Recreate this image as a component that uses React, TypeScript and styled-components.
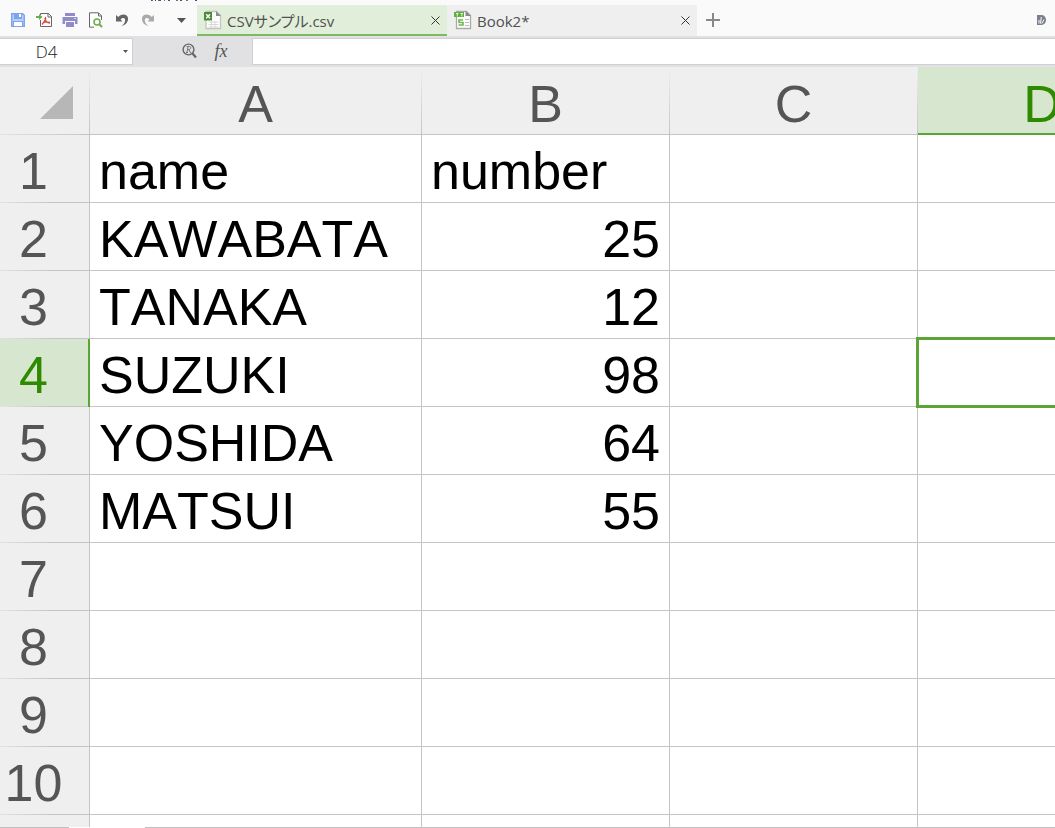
import React from "react";
import styled, { createGlobalStyle } from "styled-components";

const GlobalStyle = createGlobalStyle`
  * { box-sizing: border-box; }
  body { margin: 0; background: #fff; }
  button, input { font: inherit; color: inherit; }
`;

const UI_FONT = '"Open Sans", "Noto Sans", "Noto Sans CJK JP", sans-serif';
const SHEET_FONT = '"Liberation Sans", Arial, sans-serif';

const Window = styled.div`
  height: 100vh;
  display: flex;
  flex-direction: column;
  overflow: hidden;
  font-family: ${UI_FONT};
`;

const TopBar = styled.header`
  position: relative;
  flex: none;
  display: flex;
  align-items: flex-end;
  height: 36px;
  background: #fafafa;
`;

const MenuRemnant = styled.svg`
  position: absolute;
  left: 150px;
  top: 0;
`;

const QuickTools = styled.div`
  flex: none;
  display: flex;
  align-items: center;
  gap: 6px;
  width: 197px;
  height: 32px;
  padding: 0 0 0 8px;
`;

const ToolButton = styled.button<{ $push?: boolean }>`
  display: grid;
  place-items: center;
  width: 20px;
  height: 20px;
  margin: 0 0 0 ${(p) => (p.$push ? "7px" : "0")};
  padding: 0;
  border: 0;
  background: none;
`;

const TabItem = styled.div<{ $active?: boolean }>`
  flex: none;
  display: flex;
  align-items: center;
  width: 250px;
  height: 31px;
  padding: 1px 4px 0 7px;
  background: ${(p) => (p.$active ? "#e1eed9" : "#efefef")};
  border-bottom: 2px solid ${(p) => (p.$active ? "#7fb966" : "#efefef")};
`;

const TabLabel = styled.button`
  flex: 1;
  display: flex;
  align-items: center;
  gap: 5px;
  padding: 0;
  border: 0;
  background: none;
  font-size: 15px;
  line-height: 24px;
  font-feature-settings: "palt";
  white-space: nowrap;
  text-align: left;
  color: #505050;
`;

const TabText = styled.span`
  padding-top: 1px;
`;

const IconButton = styled.button`
  display: grid;
  place-items: center;
  width: 16px;
  height: 16px;
  padding: 0;
  border: 0;
  background: none;
`;

const NewTab = styled(IconButton)`
  width: 32px;
  height: 32px;
`;

const Badge = styled.div`
  display: grid;
  place-items: center;
  height: 32px;
  margin-left: auto;
  padding-right: 9px;
`;

const FormulaBar = styled.div`
  flex: none;
  display: flex;
  height: 31px;
  padding: 2px 0;
  background: #e1e1e4;
`;

const NameBox = styled.div`
  flex: none;
  display: flex;
  align-items: center;
  width: 133px;
  background: #fff;
  border: 1px solid #cfcfd6;
  border-left: 0;
`;

const NameInput = styled.input`
  width: 118px;
  height: 24px;
  padding: 0 25px 0 0;
  border: 0;
  outline: 0;
  background: none;
  text-align: center;
  font-size: 17px;
  font-weight: 300;
  color: #222;
`;

const FormulaTools = styled.div`
  flex: none;
  display: flex;
  align-items: center;
  justify-content: flex-end;
  gap: 13px;
  width: 119px;
  padding: 0 21px 2px 0;
`;

const FxButton = styled.button`
  width: 20px;
  padding: 0;
  border: 0;
  background: none;
  font: italic 18px/20px "Liberation Serif", serif;
  color: #555;
`;

const FormulaInput = styled.input`
  flex: 1;
  min-width: 0;
  padding: 0 6px;
  border: 1px solid #cfcfd6;
  border-right: 0;
  outline: 0;
  background: #fff;
  font-size: 17px;
`;

const SheetArea = styled.main`
  flex: 1;
  min-height: 0;
  overflow: hidden;
`;

const Sheet = styled.table`
  table-layout: fixed;
  width: 1166px;
  border-collapse: separate;
  border-spacing: 0;
  font-family: ${SHEET_FONT};
  font-size: 52px;
  line-height: 60px;
  font-kerning: none;
`;

const Col = styled.col<{ $w: number }>`
  width: ${(p) => p.$w}px;
`;

const Corner = styled.td`
  height: 68px;
  padding: 0 17px 16px 0;
  vertical-align: bottom;
  background:
    linear-gradient(#efefef, #c4c4c4) right / 1px 100% no-repeat,
    linear-gradient(90deg, #e2e2e2, #c4c4c4) bottom / 100% 1px no-repeat,
    #efefef;
`;

const CornerMark = styled.svg`
  display: block;
  margin-left: auto;
`;

const ColumnHead = styled.th<{ $active?: boolean }>`
  height: 68px;
  padding: ${(p) => (p.$active ? "6px 0 0" : "6px 1px 1px 0")};
  font-weight: 400;
  color: ${(p) => (p.$active ? "#308a00" : "#555")};
  background: ${(p) =>
    p.$active
      ? "linear-gradient(#5aa535, #5aa535) bottom / 100% 2px no-repeat, #d7e6cf"
      : "linear-gradient(#c4c4c4, #c4c4c4) bottom / 100% 1px no-repeat, linear-gradient(#efefef, #c4c4c4) right / 1px 100% no-repeat, #efefef"};
`;

const RowHead = styled.th<{ $active?: boolean }>`
  height: 68px;
  padding: 5px 23px 1px 0;
  font-weight: 400;
  color: ${(p) => (p.$active ? "#308a00" : "#555")};
  background:
    linear-gradient(${(p) => (p.$active ? "#5aa535, #5aa535" : "#c4c4c4, #c4c4c4")}) right /
      ${(p) => (p.$active ? "2px" : "1px")} 100% no-repeat,
    linear-gradient(90deg, #e2e2e2, #c4c4c4 60%) bottom / 100% 1px no-repeat,
    ${(p) => (p.$active ? "#d7e6cf" : "#efefef")};
`;

const Cell = styled.td<{ $align?: "right"; $selected?: boolean }>`
  position: relative;
  z-index: ${(p) => (p.$selected ? 1 : 0)};
  height: 68px;
  padding: 5px 9px 0;
  text-align: ${(p) => p.$align ?? "left"};
  white-space: nowrap;
  color: #000;
  background: #fff;
  border-right: 1px solid #c4c4c4;
  border-bottom: 1px solid #c4c4c4;
`;

const Selection = styled.div`
  position: absolute;
  inset: -2px;
  border: 3px solid #5aa535;
`;

const SheetTabsEdge = styled.footer`
  flex: none;
  height: 1px;
  padding-left: 69px;
  background: #c0c0c0;
`;

const SheetTab = styled.div`
  width: 76px;
  height: 1px;
  background: #fff;
`;

const SaveIcon = () => (
  <svg width="16" height="16" viewBox="0 0 16 16">
    <path d="M1 1h12l2 2v12H1z" fill="#7da4ec" />
    <path d="M2.500 2.500H4V7h8V2.500l1.500 1v10H13V9H3v4.500h-.5z" fill="#b9cff6" />
    <path d="M9 2h2v3H9zM4 10h8v4H4z" fill="#fff" />
  </svg>
);

const PdfIcon = () => (
  <svg width="17" height="16" viewBox="0 0 17 16">
    <path d="M4.500 3V1.500h8l3 3v10h-11V8" fill="#fff" stroke="#666" />
    <path d="M12 1v4h4" fill="none" stroke="#666" />
    <path d="M0 4h3V2l3.500 3L3 8V6H0z" fill="#6aae4c" />
    <path d="M9 5.500c1.500 0 .5 3-3 7M9 6c.3 3 2 5 5 5M7 11c2-1.500 4-1.500 7-.5" fill="none" stroke="#e04848" strokeWidth="1.400" />
  </svg>
);

const PrintIcon = () => (
  <svg width="16" height="16" viewBox="0 0 16 16">
    <path d="M3 1h10v3H3zM.5 5h15v7H13V9H3v3H.5zM4 10h8v5H4z" fill="#918bcb" />
    <path d="M12 6.500h2" stroke="#d9d7f0" />
  </svg>
);

const PreviewIcon = () => (
  <svg width="16" height="16" viewBox="0 0 16 16">
    <path d="M6 15.200H1.500V.800h9l3 3V8" fill="#fff" stroke="#666" />
    <path d="M10.500 1v3h3" fill="none" stroke="#666" />
    <circle cx="9" cy="10" r="3" fill="#fff" stroke="#6aae4c" strokeWidth="1.500" />
    <path d="M11 12l3 3" stroke="#6aae4c" strokeWidth="2" />
  </svg>
);

const TurnIcon = ({ redo }: { redo?: boolean }) => (
  <svg width="14" height="14" viewBox="0 0 14 14">
    <g transform={redo ? "matrix(-1 0 0 1 14 0)" : undefined} fill={redo ? "#aaa" : "#666"}>
      <path d="M1 2v6.500h6.500L5.600 6.500C8 4 10.700 5 10.100 7.800c-.4 2-1.400 3.600-3.300 5.200 4.200-1.200 6.600-4.300 6.200-7.700C12.500 1 7 .300 3.300 4z" />
    </g>
  </svg>
);

const CaretIcon = ({ w = 9, h = 5 }: { w?: number; h?: number }) => (
  <svg width={w} height={h} viewBox="0 0 10 5" preserveAspectRatio="none">
    <path d="M0 0h10L5 5z" fill="#555" />
  </svg>
);

const SheetFileIcon = () => (
  <svg width="18" height="20" viewBox="0 0 18 20">
    <path d="M2 1.500h10.500l4 4v13H2z" fill="#fff" stroke="#c4c4c4" strokeWidth="1.300" />
    <path d="M12 1v5h5z" fill="#8a8f8a" />
    <path d="M4.500 12h10M4.500 14.500h10M4.500 17h10M7.500 11v6.500M11 11v6.500" stroke="#d8d8d8" />
    <path d="M0 2h8v8.500H0z" fill="#4a8c34" />
    <path d="M2.200 4.300l3.800 4M6 4.300l-3.800 4" stroke="#fff" strokeWidth="1.400" />
  </svg>
);

const BookFileIcon = () => (
  <svg width="18" height="20" viewBox="0 0 18 20">
    <path d="M2.500 1.500h10l4 4v13h-14z" fill="#fff" stroke="#aaa" strokeWidth="1.300" />
    <path d="M11.500 1v5H17z" fill="#888" />
    <path d="M0 2h10v5H0z" fill="#5fae3f" />
    <path d="M2 3.500h2.500M3.300 3v3.500M6.500 3.500H9M7.800 3v3.500" stroke="#dff0d5" />
    <path d="M9 10H5v2.500h4V15H4.500" fill="none" stroke="#6fb74e" strokeWidth="1.600" />
    <path d="M11 9.500h4M11 12.500h4M11 15.500h4" stroke="#bbb" />
  </svg>
);

const CloseIcon = () => (
  <svg width="9" height="9" viewBox="0 0 9 9">
    <path d="M.5.500l8 8M8.500.500l-8 8" stroke="#333" />
  </svg>
);

const PlusIcon = () => (
  <svg width="14" height="14" viewBox="0 0 14 14">
    <path d="M7 0v14M0 7h14" stroke="#888" strokeWidth="2" />
  </svg>
);

const BadgeIcon = () => (
  <svg width="9" height="10" viewBox="0 0 9 10">
    <path d="M0 0h4.500a4.500 5 0 0 1 0 10H0z" fill="#7b7f8e" />
    <path d="M2 8.500V5M3.500 8.500L4.300 2M4.800 8.500L7 4.500" stroke="#fff" />
  </svg>
);

const LookupIcon = () => (
  <svg width="16" height="16" viewBox="0 0 16 16">
    <circle cx="6.500" cy="6.500" r="5.400" fill="none" stroke="#666" strokeWidth="1.400" />
    <path d="M10.500 10.500l3.500 4" stroke="#666" strokeWidth="2.200" />
    <path d="M4 9.500h2M5 9.500L6 3.500M4.500 3.500h3c2 0 1.500 3-.5 3H5.500M7 6.500l1.200 3h1" fill="none" stroke="#777" />
  </svg>
);

const columns = [
  { name: "A", width: 332 },
  { name: "B", width: 248 },
  { name: "C", width: 248 },
  { name: "D", width: 248 },
];

const data: [string, string][] = [
  ["name", "number"],
  ["KAWABATA", "25"],
  ["TANAKA", "12"],
  ["SUZUKI", "98"],
  ["YOSHIDA", "64"],
  ["MATSUI", "55"],
];

const selected = { column: "D", row: 4 };

const rows = Array.from({ length: 10 }, (_, i) => i + 1);

export default function App() {
  return (
    <Window>
      <GlobalStyle />
      <TopBar>
        <MenuRemnant width="50" height="1" viewBox="0 0 50 1" aria-hidden="true">
          <path d="M1 .5h1M5 .5h1M9 .5h2M18 .5h2M30 .5h2M45 .5h2" stroke="#3f4f92" />
          <path d="M2 .5h1M8 .5h1M14 .5h1M26 .5h2M36 .5h2" stroke="#8a6a5a" />
        </MenuRemnant>
        <QuickTools>
          <ToolButton aria-label="Save"><SaveIcon /></ToolButton>
          <ToolButton aria-label="Export to PDF"><PdfIcon /></ToolButton>
          <ToolButton aria-label="Print"><PrintIcon /></ToolButton>
          <ToolButton aria-label="Print preview"><PreviewIcon /></ToolButton>
          <ToolButton aria-label="Undo"><TurnIcon /></ToolButton>
          <ToolButton aria-label="Redo"><TurnIcon redo /></ToolButton>
          <ToolButton aria-label="More tools" $push><CaretIcon /></ToolButton>
        </QuickTools>
        <TabItem $active>
          <TabLabel><SheetFileIcon /><TabText>CSVサンプル.csv</TabText></TabLabel>
          <IconButton aria-label="Close CSVサンプル.csv"><CloseIcon /></IconButton>
        </TabItem>
        <TabItem>
          <TabLabel><BookFileIcon /><TabText>Book2*</TabText></TabLabel>
          <IconButton aria-label="Close Book2"><CloseIcon /></IconButton>
        </TabItem>
        <NewTab aria-label="New tab"><PlusIcon /></NewTab>
        <Badge><BadgeIcon /></Badge>
      </TopBar>
      <FormulaBar>
        <NameBox>
          <NameInput aria-label="Name box" defaultValue="D4" />
          <IconButton aria-label="Open name list"><CaretIcon w={5} h={3} /></IconButton>
        </NameBox>
        <FormulaTools>
          <IconButton aria-label="Look up"><LookupIcon /></IconButton>
          <FxButton aria-label="Insert function">fx</FxButton>
        </FormulaTools>
        <FormulaInput aria-label="Formula" />
      </FormulaBar>
      <SheetArea>
        <Sheet>
          <colgroup>
            <Col $w={90} />
            {columns.map((c) => <Col key={c.name} $w={c.width} />)}
          </colgroup>
          <thead>
            <tr>
              <Corner>
                <CornerMark width="33" height="33" viewBox="0 0 33 33">
                  <path d="M33 0v33H0z" fill="#b7b7b7" />
                </CornerMark>
              </Corner>
              {columns.map((c) => (
                <ColumnHead key={c.name} scope="col" $active={c.name === selected.column}>{c.name}</ColumnHead>
              ))}
            </tr>
          </thead>
          <tbody>
            {rows.map((row) => (
              <tr key={row}>
                <RowHead scope="row" $active={row === selected.row}>{row}</RowHead>
                <Cell>{data[row - 1]?.[0]}</Cell>
                <Cell $align={row > 1 ? "right" : undefined}>{data[row - 1]?.[1]}</Cell>
                <Cell />
                <Cell $selected={row === selected.row}>{row === selected.row && <Selection />}</Cell>
              </tr>
            ))}
            <tr>
              <RowHead as="td" />
              {columns.map((c) => <Cell key={c.name} />)}
            </tr>
          </tbody>
        </Sheet>
      </SheetArea>
      <SheetTabsEdge><SheetTab /></SheetTabsEdge>
    </Window>
  );
}
